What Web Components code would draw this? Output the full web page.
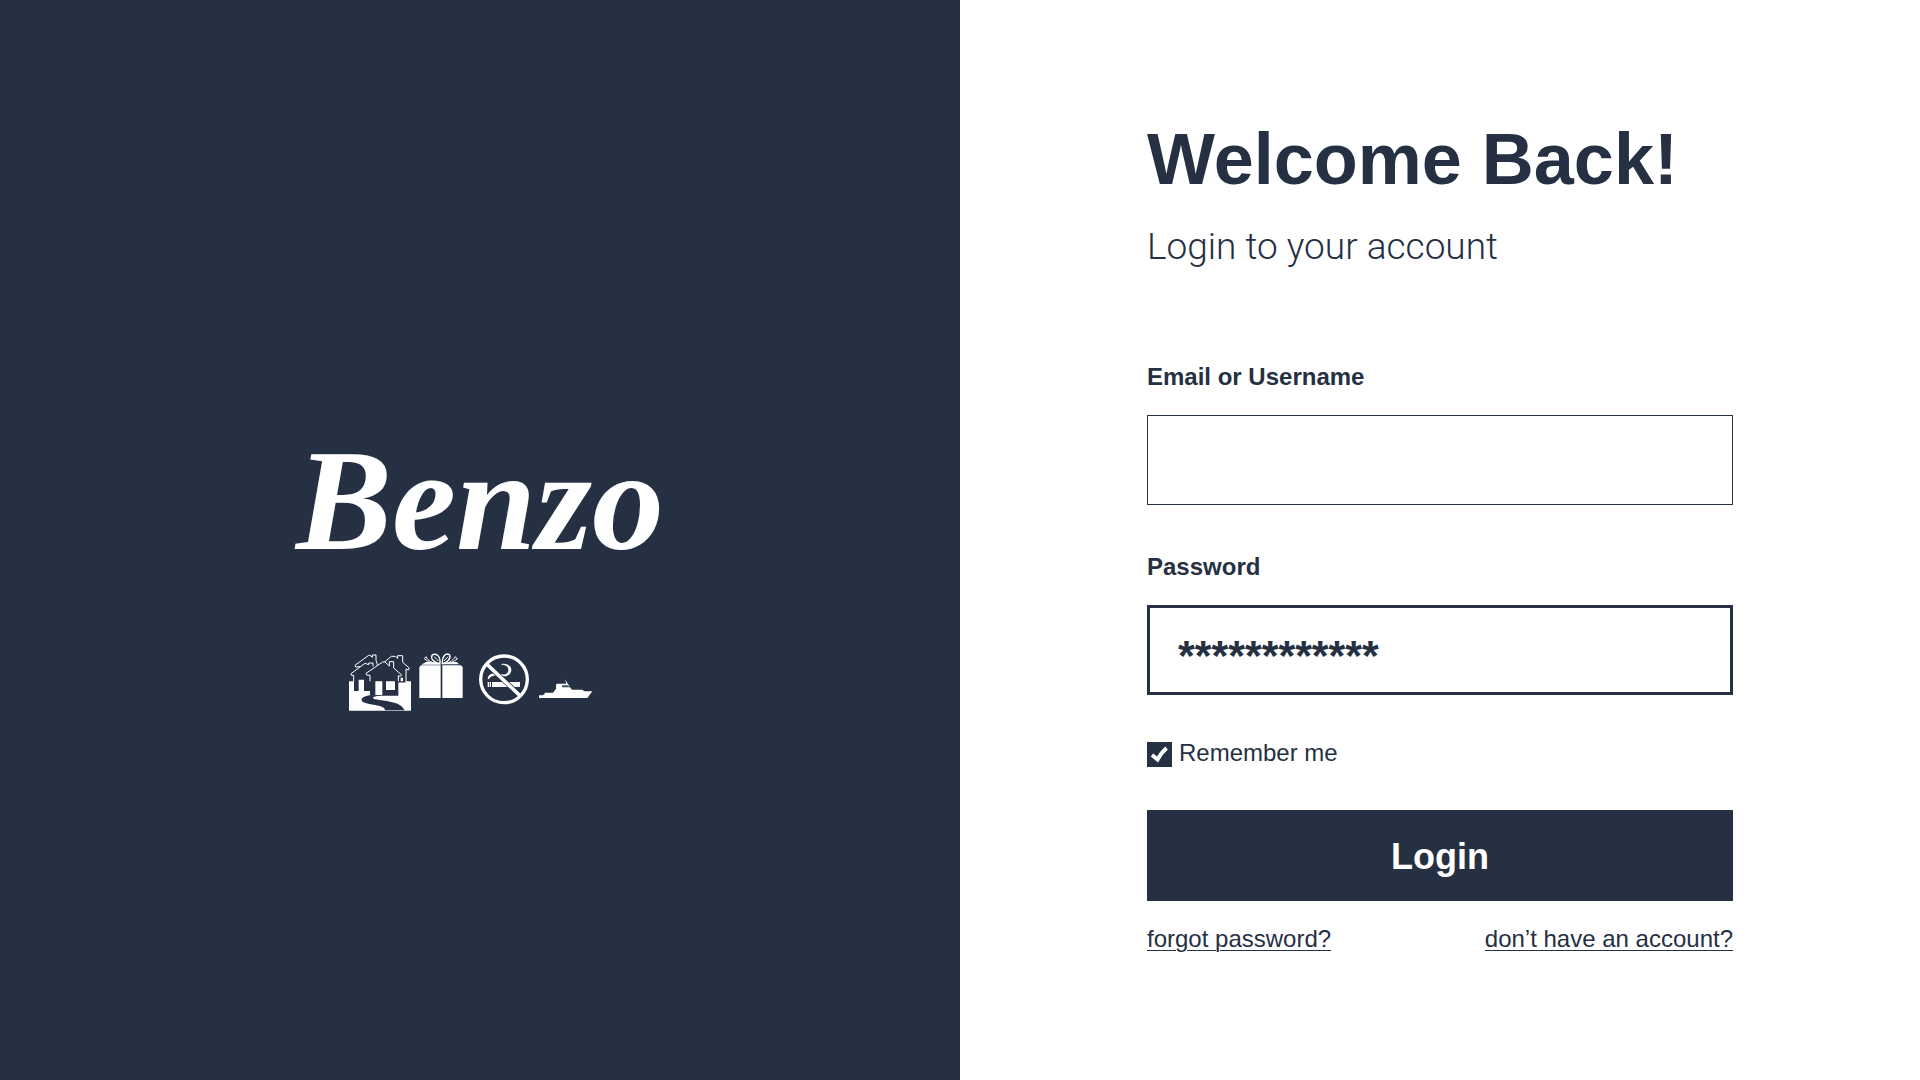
<!DOCTYPE html>
<html lang="en">
<head>
<meta charset="utf-8">
<title>Benzo – Login</title>
<style>
  :root { --ink: #263043; --paper: #ffffff; }
  body { margin: 0; background: var(--paper); color: var(--ink); font-family: "Liberation Sans", Arial, sans-serif; }
</style>
</head>
<body>
<login-page>
  <brand-panel slot="brand"></brand-panel>
  <login-form slot="form"></login-form>
</login-page>

<script>
const define = (name, html, setup) => customElements.define(name, class extends HTMLElement {
  connectedCallback() {
    if (this.shadowRoot) return;
    const t = document.createElement('template');
    t.innerHTML = html;
    this.attachShadow({ mode: 'open', delegatesFocus: name === 'text-field' }).append(t.content.cloneNode(true));
    if (setup) setup(this, this.shadowRoot);
  }
});

define('login-page', `
<style>
  :host { display: grid; grid-template-columns: 1fr 1fr; min-height: 100vh; }
  main, aside { display: grid; }
</style>
<aside><slot name="brand"></slot></aside>
<main><slot name="form"></slot></main>`);

define('brand-icon', `
<style>
  :host { display: block; width: 62px; height: 64px; }
  svg { display: block; width: 100%; height: 100%; }
</style>
<svg aria-hidden="true"></svg>`, (el, root) => {
  const art = {
    houses: ['27 30 186 192', `
      <path d="M27 127H213V215H27Z" fill="#fff"/>
      <g fill="var(--ink)" stroke="#fff" stroke-width="3">
        <path d="M60 83 47 84 45 79 86 49H90L97 55V48H108V64L112 76V100"/>
        <path d="M128 74 154 52H166L173 58V50H188V70L208 87 205 93 198 90V132H176"/>
      </g>
      <path d="M42 156V110L34 109 33 104 75 73 86 77V72H99V80L112 90V156Z" fill="var(--ink)"/>
      <path d="M41 127V109L34 109 33 104 75 73 86 77V72H99V82" fill="none" stroke="#fff" stroke-width="3"/>
      <path d="M90 170V109L80 108 78 103 128 69H135L148 81V68H161V87L185 108 180 112 175 110V170Z" fill="var(--ink)"/>
      <path d="M90 127V109L80 108 78 103 128 69H135L148 81V68H161V87L185 108 180 112 175 110V127" fill="none" stroke="#fff" stroke-width="3"/>
      <path d="M56 122H72V156H56ZM106 127H127V168H106ZM138 127H165V153H138ZM182 116H189V127H182Z" fill="#fff"/>
      <path d="M90 169H124C97 173 94 177 105 181 137 187 181 187 194 214H135C136 196 78 199 66 187 60 178 76 170 90 169Z" fill="var(--ink)"/>`],
    gift: ['213 30 186 192', `
      <path d="M238 85 243 79H302V177H238ZM307 79H363L368 84V177H307Z" fill="#fff"/>
      <path d="M246 76 258 69H280L301 75V77H246ZM307 75 330 69H350L356 74V76H307Z" fill="#fff"/>
      <g fill="var(--ink)" stroke="#fff" stroke-width="4">
        <path d="M300 74C281 71 271 58 276 49 286 41 302 48 300 74Z"/>
        <path d="M307 74C306 50 319 40 329 48 334 59 322 70 307 74Z"/>
      </g>
      <path d="M297 74C280 74 263 66 258 53L253 59 268 70M310 74C326 73 337 67 346 53L352 60 336 70" fill="none" stroke="#fff" stroke-width="3"/>
      <path d="M283 53 295 66M324 53 312 66" stroke="#fff" stroke-width="3"/>`],
    nosmoking: ['39 30 186 192', `
      <path d="M83 129H87V144H83ZM89 129H93V144H89ZM96 129H180V144H96Z" fill="#fff"/>
      <path d="M124 75C140 72 153 80 154 92 154 103 146 111 133 112 112 107 90 108 87 121L83 119C86 102 98 101 126 106 140 108 146 99 145 91 144 82 136 77 124 77Z" fill="#fff"/>
      <path d="M84 79 177 167" stroke="var(--ink)" stroke-width="15"/>
      <path d="M80 75 181 171" stroke="#fff" stroke-width="11"/>
      <circle cx="132" cy="121" r="70" fill="none" stroke="#fff" stroke-width="10"/>`],
    yacht: ['225 30 186 192', `
      <path d="M237 177V169H248L254 165V161H279L288 149V137L291 134H319L315 121 325 137H326L329 142H306V145H330L336 152H367L373 157H397L382 177Z" fill="#fff"/>
      <path d="M306 139H325V142H306Z" fill="var(--ink)"/>`]
  }[el.getAttribute('name')];
  const svg = root.querySelector('svg');
  svg.setAttribute('viewBox', art[0]);
  svg.innerHTML = art[1];
});

define('brand-panel', `
<style>
  :host { display: flex; flex-direction: column; align-items: center; justify-content: center; gap: 68px;
          box-sizing: border-box; padding-top: 54px; background: var(--ink); color: var(--paper); }
  .logo { font: italic bold 144px/160px "Brush Script MT", "Brush Script Std", "Liberation Serif", serif; }
  .icons { display: flex; padding-right: 14px; }
</style>
<div class="logo">Benzo</div>
<div class="icons">
  <brand-icon name="houses"></brand-icon><brand-icon name="gift"></brand-icon>
  <brand-icon name="nosmoking"></brand-icon><brand-icon name="yacht"></brand-icon>
</div>`);

define('text-field', `
<style>
  :host { display: flex; flex-direction: column; gap: 24px; }
  label { font-size: 24px; line-height: 28px; font-weight: bold; }
  input { box-sizing: border-box; width: 100%; height: 90px; margin: 0; padding: 0 31px; border: 1px solid var(--ink);
          border-radius: 0; background: var(--paper); color: var(--ink); font: bold 24px "Liberation Sans", Arial, sans-serif; outline: 0; }
  :host([active]) input { border-width: 3px; padding: 10px 28px 0; font-size: 43px; }
</style>
<label for="f"></label>
<input id="f" type="text">`, (el, root) => {
  root.querySelector('label').textContent = el.getAttribute('label');
  root.querySelector('input').value = el.getAttribute('value') || '';
});

define('check-box', `
<style>
  :host { display: flex; }
  label { display: flex; gap: 7px; align-items: flex-end; font-size: 24px; line-height: 28px; }
  input { appearance: none; display: block; width: 25px; height: 25px; margin: 0; background: var(--ink); }
  .box { display: grid; }
  .box > * { grid-area: 1 / 1; }
  svg { width: 25px; height: 25px; pointer-events: none; visibility: hidden; }
  input:checked + svg { visibility: visible; }
</style>
<label><span class="box"><input type="checkbox" checked>
<svg viewBox="0 0 25 25" aria-hidden="true"><path d="M5 13 10.5 17.5Q14 11 19.5 6" fill="none" stroke="#fff" stroke-width="4"/></svg></span><slot></slot></label>`);

define('login-form', `
<style>
  :host { display: flex; flex-direction: column; box-sizing: border-box; width: 100%; max-width: 586px; margin: 0 auto; padding-top: 119px; }
  h1 { margin: 0; font-size: 72px; line-height: 80px; }
  p { margin: 28px 0 0; font: 300 37px/40px Roboto, "Liberation Sans", sans-serif; }
  form { display: flex; flex-direction: column; margin-top: 96px; }
  text-field { margin-bottom: 48px; }
  text-field[active] { margin-bottom: 44px; }
  button { height: 91px; margin: 43px 0 24px; padding: 2px 0 0; border: 0; background: var(--ink); color: var(--paper);
           font: bold 36px/40px "Liberation Sans", Arial, sans-serif; }
  nav { display: flex; justify-content: space-between; font-size: 24px; line-height: 28px; }
  a { color: inherit; text-decoration: underline 1px; text-underline-offset: 3px; }
</style>
<h1>Welcome Back!</h1>
<p>Login to your account</p>
<form>
  <text-field label="Email or Username"></text-field>
  <text-field label="Password" value="************" active></text-field>
  <check-box>Remember me</check-box>
  <button type="button">Login</button>
  <nav><a href="#forgot">forgot password?</a><a href="#signup">don’t have an account?</a></nav>
</form>`);
</script>
</body>
</html>
